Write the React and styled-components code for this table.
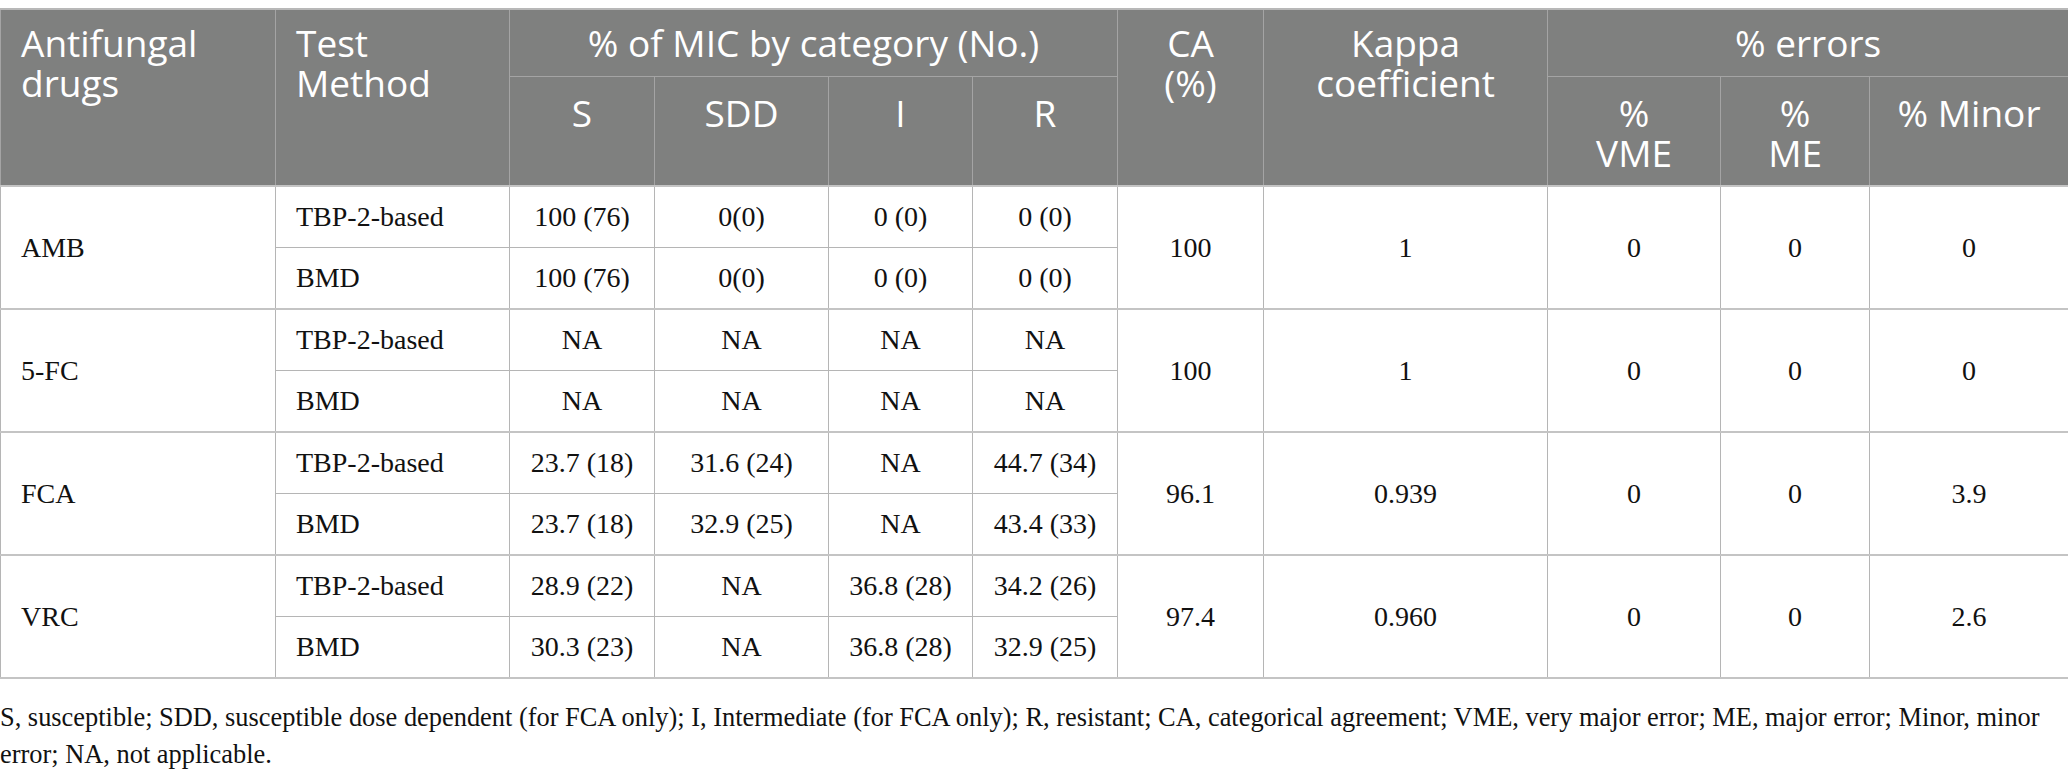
import React from 'react';
import styled, { createGlobalStyle } from 'styled-components';

const GlobalStyle = createGlobalStyle`
  body {
    margin: 0;
    background: #ffffff;
  }
`;

const Page = styled.div`
  padding-top: 8px;
  width: 2068px;
`;

const Table = styled.table`
  width: 2068px;
  border-collapse: collapse;
  table-layout: fixed;
  border-top: 2px solid #b8b8b8;
`;

const Col = styled.col`
  width: ${(p) => p.$w}px;
`;

const HeadRow = styled.tr`
  height: ${(p) => p.$h}px;
`;

const HeadCell = styled.th`
  background: #7f807f;
  color: #ffffff;
  border: 1px solid #a4a4a4;
  font-family: 'Open Sans', 'Noto Sans', sans-serif;
  font-weight: 400;
  font-size: 37px;
  line-height: 40px;
  text-align: ${(p) => p.$align || 'center'};
  vertical-align: top;
  padding: ${(p) => (p.$sub ? '16px 8px 0' : '13px 20px 0')};
  white-space: nowrap;
`;

const Body = styled.tbody`
  border-top: 2px solid #c4c4c4;
`;

const Row = styled.tr`
  height: 61.5px;
`;

const Cell = styled.td`
  border: 1px solid #b5b5b5;
  border-top: ${(p) => (p.$group ? '2px solid #c4c4c4' : '1px solid #b5b5b5')};
  font-family: 'Liberation Serif', 'Times New Roman', serif;
  font-size: 28px;
  color: #111111;
  text-align: ${(p) => p.$align || 'center'};
  vertical-align: middle;
  padding: 0 ${(p) => (p.$align === 'left' ? '20px' : '6px')};
  white-space: nowrap;
`;

const LastBody = styled.tbody`
  border-bottom: 2px solid #c4c4c4;
`;

const Note = styled.p`
  margin: 20px 0 0;
  font-family: 'Liberation Serif', 'Times New Roman', serif;
  font-size: 26.4px;
  line-height: 37px;
  color: #111111;
`;

const widths = [275, 234, 145, 174, 144, 145, 146, 284, 173, 149, 199];

const groups = [
  {
    drug: 'AMB',
    rows: [
      ['TBP-2-based', '100 (76)', '0(0)', '0 (0)', '0 (0)'],
      ['BMD', '100 (76)', '0(0)', '0 (0)', '0 (0)'],
    ],
    ca: '100',
    kappa: '1',
    vme: '0',
    me: '0',
    minor: '0',
  },
  {
    drug: '5-FC',
    rows: [
      ['TBP-2-based', 'NA', 'NA', 'NA', 'NA'],
      ['BMD', 'NA', 'NA', 'NA', 'NA'],
    ],
    ca: '100',
    kappa: '1',
    vme: '0',
    me: '0',
    minor: '0',
  },
  {
    drug: 'FCA',
    rows: [
      ['TBP-2-based', '23.7 (18)', '31.6 (24)', 'NA', '44.7 (34)'],
      ['BMD', '23.7 (18)', '32.9 (25)', 'NA', '43.4 (33)'],
    ],
    ca: '96.1',
    kappa: '0.939',
    vme: '0',
    me: '0',
    minor: '3.9',
  },
  {
    drug: 'VRC',
    rows: [
      ['TBP-2-based', '28.9 (22)', 'NA', '36.8 (28)', '34.2 (26)'],
      ['BMD', '30.3 (23)', 'NA', '36.8 (28)', '32.9 (25)'],
    ],
    ca: '97.4',
    kappa: '0.960',
    vme: '0',
    me: '0',
    minor: '2.6',
  },
];

const Group = ({ g }) => (
  <>
    <Row>
      <Cell $group $align="left" rowSpan={2}>{g.drug}</Cell>
      <Cell $group $align="left">{g.rows[0][0]}</Cell>
      {g.rows[0].slice(1).map((v, i) => (
        <Cell $group key={i}>{v}</Cell>
      ))}
      <Cell $group rowSpan={2}>{g.ca}</Cell>
      <Cell $group rowSpan={2}>{g.kappa}</Cell>
      <Cell $group rowSpan={2}>{g.vme}</Cell>
      <Cell $group rowSpan={2}>{g.me}</Cell>
      <Cell $group rowSpan={2}>{g.minor}</Cell>
    </Row>
    <Row>
      <Cell $align="left">{g.rows[1][0]}</Cell>
      {g.rows[1].slice(1).map((v, i) => (
        <Cell key={i}>{v}</Cell>
      ))}
    </Row>
  </>
);

export default function App() {
  return (
    <Page>
      <GlobalStyle />
      <Table>
        <colgroup>
          {widths.map((w, i) => (
            <Col key={i} $w={w} />
          ))}
        </colgroup>
        <thead>
          <HeadRow $h={67}>
            <HeadCell $align="left" rowSpan={2}>Antifungal<br />drugs</HeadCell>
            <HeadCell $align="left" rowSpan={2}>Test<br />Method</HeadCell>
            <HeadCell colSpan={4}>% of MIC by category (No.)</HeadCell>
            <HeadCell rowSpan={2}>CA<br />(%)</HeadCell>
            <HeadCell rowSpan={2}>Kappa<br />coefficient</HeadCell>
            <HeadCell colSpan={3}>% errors</HeadCell>
          </HeadRow>
          <HeadRow $h={110}>
            <HeadCell $sub>S</HeadCell>
            <HeadCell $sub>SDD</HeadCell>
            <HeadCell $sub>I</HeadCell>
            <HeadCell $sub>R</HeadCell>
            <HeadCell $sub>%<br />VME</HeadCell>
            <HeadCell $sub>%<br />ME</HeadCell>
            <HeadCell $sub>% Minor</HeadCell>
          </HeadRow>
        </thead>
        <Body>
          {groups.slice(0, 3).map((g) => (
            <Group key={g.drug} g={g} />
          ))}
        </Body>
        <LastBody>
          <Group g={groups[3]} />
        </LastBody>
      </Table>
      <Note>
        S, susceptible; SDD, susceptible dose dependent (for FCA only); I, Intermediate (for FCA only); R,
        resistant; CA, categorical agreement; VME, very major error; ME, major error; Minor, minor
        error; NA, not applicable.
      </Note>
    </Page>
  );
}
